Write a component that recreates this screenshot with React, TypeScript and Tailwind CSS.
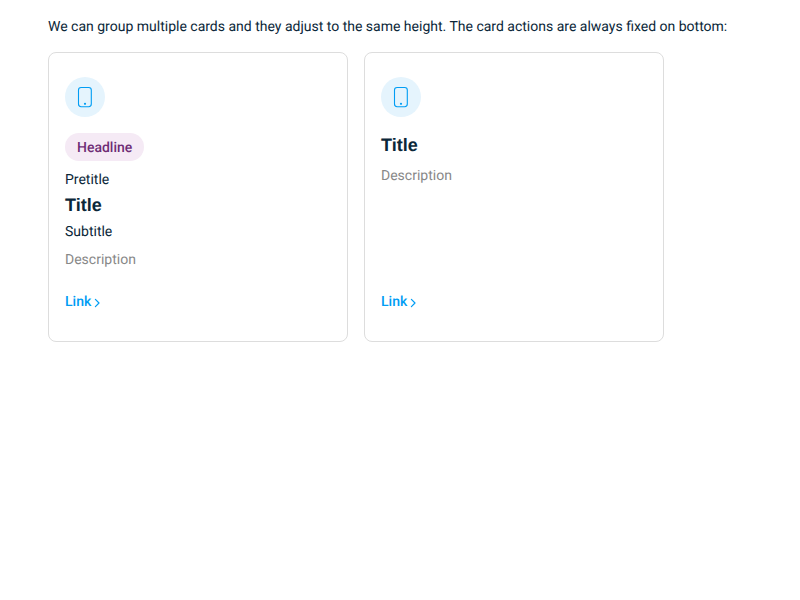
import React from "react";

function PhoneIcon() {
  return (
    <div className="flex size-10 items-center justify-center rounded-full bg-[#e5f4fd]">
      <svg width="24" height="24" viewBox="0 0 24 24" fill="none">
        <rect x="5.5" y="2.5" width="12.8" height="19.2" rx="2.6" stroke="#019df4" strokeWidth="1.1" />
        <circle cx="12" cy="18.8" r="1.1" fill="#019df4" />
      </svg>
    </div>
  );
}

function CardLink() {
  return (
    <a className="flex items-center text-sm leading-5 font-medium text-[#019df4]">
      Link
      <svg className="mt-px ml-[2px]" width="8" height="12" viewBox="0 0 8 12" fill="none">
        <path d="M2.4 2.4L6 6L2.4 9.6" stroke="#019df4" strokeWidth="1.2" strokeLinecap="round" strokeLinejoin="round" />
      </svg>
    </a>
  );
}

type CardProps = {
  headline?: string;
  pretitle?: string;
  title: string;
  subtitle?: string;
  description: string;
};

function Card({ headline, pretitle, title, subtitle, description }: CardProps) {
  return (
    <section className="flex h-[290px] w-[300px] flex-col items-start rounded-lg border border-[#dddddd] bg-white px-4 pt-6 pb-[29px]">
      <PhoneIcon />
      <div className="flex flex-col items-start pt-4">
        {headline && (
          <span className="mb-[9px] flex h-7 items-center rounded-full bg-[#f5eaf5] px-3 pt-0.5 text-sm font-medium text-[#6e2d75]">
            {headline}
          </span>
        )}
        {pretitle && <p className="mb-[3px] text-sm leading-5">{pretitle}</p>}
        <h2 className="font-['Liberation_Sans',sans-serif] text-lg leading-6 font-bold">{title}</h2>
        {subtitle && <p className="mt-[5px] -mb-px text-sm leading-5">{subtitle}</p>}
        <p className="mt-[9px] text-sm leading-5 text-[#888888]">{description}</p>
      </div>
      <div className="mt-auto">
        <CardLink />
      </div>
    </section>
  );
}

export default function App() {
  return (
    <main className="min-h-screen bg-white px-12 pt-[17px] font-[Roboto,sans-serif] text-[#0b2739] antialiased [text-rendering:geometricPrecision]">
      <p className="text-sm leading-5">
        We can group multiple cards and they adjust to the same height. The card actions are always fixed on bottom:
      </p>
      <div className="mt-[15px] flex gap-4">
        <Card headline="Headline" pretitle="Pretitle" title="Title" subtitle="Subtitle" description="Description" />
        <Card title="Title" description="Description" />
      </div>
    </main>
  );
}
